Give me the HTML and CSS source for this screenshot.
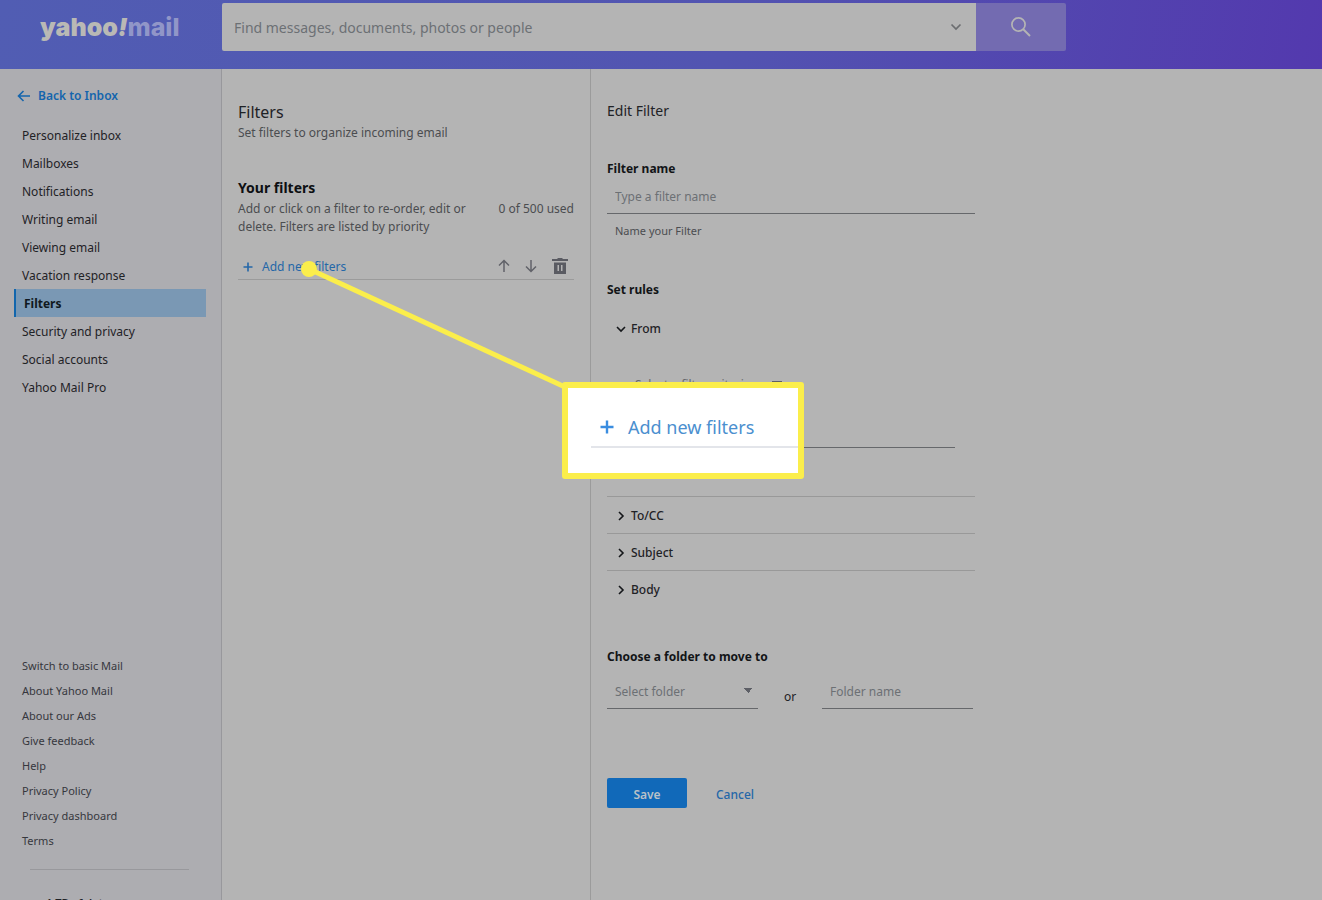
FILE: index.html
```html
<!DOCTYPE html>
<html lang="en">
<head>
<meta charset="utf-8">
<title>Yahoo Mail - Filters</title>
<link rel="stylesheet" href="styles.css">
</head>
<body>
<div class="app">
  <header class="topbar">
    <a class="logo" href="#" aria-label="Yahoo Mail"><span class="logo-yahoo">yahoo<i>!</i></span><span class="logo-mail">mail</span></a>
    <form class="search">
      <div class="search-field">
        <input class="search-input" type="text" aria-label="Search" placeholder="Find messages, documents, photos or people">
        <button class="icon-button" type="button" aria-label="Search options"><svg width="12" height="8" viewBox="0 0 12 8"><path d="M1.500 1.500 6 6l4.500-4.500" fill="none" stroke="#6b6d70" stroke-width="1.700"/></svg></button>
      </div>
      <button class="search-button" type="button" aria-label="Search"><svg width="22" height="22" viewBox="0 0 22 22" fill="none" stroke="#b4b4b4" stroke-width="1.700"><circle cx="8.500" cy="8.500" r="6.600"/><path d="m13 13 7 7" stroke-width="2"/></svg></button>
    </form>
  </header>
  <div class="columns">
    <nav class="sidebar">
      <a class="back" href="#"><svg width="14" height="12" viewBox="0 0 14 12" fill="none" stroke="#1465ad" stroke-width="1.600"><path d="M13 6H1.500M6.500 1l-5 5 5 5"/></svg>Back to Inbox</a>
      <ul class="menu">
        <li><a href="#">Personalize inbox</a></li>
        <li><a href="#">Mailboxes</a></li>
        <li><a href="#">Notifications</a></li>
        <li><a href="#">Writing email</a></li>
        <li><a href="#">Viewing email</a></li>
        <li><a href="#">Vacation response</a></li>
        <li><a class="current" href="#">Filters</a></li>
        <li><a href="#">Security and privacy</a></li>
        <li><a href="#">Social accounts</a></li>
        <li><a href="#">Yahoo Mail Pro</a></li>
      </ul>
      <div class="side-foot">
        <ul class="links">
          <li><a href="#">Switch to basic Mail</a></li>
          <li><a href="#">About Yahoo Mail</a></li>
          <li><a href="#">About our Ads</a></li>
          <li><a href="#">Give feedback</a></li>
          <li><a href="#">Help</a></li>
          <li><a href="#">Privacy Policy</a></li>
          <li><a href="#">Privacy dashboard</a></li>
          <li><a href="#">Terms</a></li>
        </ul>
        <div class="quota">1 TB of data</div>
      </div>
    </nav>
    <section class="filters">
      <h1 class="title">Filters</h1>
      <p class="note">Set filters to organize incoming email</p>
      <h2 class="subtitle">Your filters</h2>
      <div class="summary"><p class="note">Add or click on a filter to re-order, edit or delete. Filters are listed by priority</p><span class="note count">0 of 500 used</span></div>
      <div class="toolbar">
        <button class="add" type="button"><svg width="10" height="10" viewBox="0 0 10 10" stroke="#2467a8" stroke-width="1.600"><path d="M5 .5v9M.5 5h9"/></svg>Add new filters</button>
        <div class="tools">
          <button class="icon-button" type="button" aria-label="Move up"><svg width="12" height="14" viewBox="0 0 12 14" fill="none" stroke="#616269" stroke-width="1.500"><path d="M6 13V1.500M1 6.500l5-5 5 5"/></svg></button>
          <button class="icon-button" type="button" aria-label="Move down"><svg width="12" height="14" viewBox="0 0 12 14" fill="none" stroke="#616269" stroke-width="1.500"><path d="M6 1v11.500M1 7.500l5 5 5-5"/></svg></button>
          <button class="icon-button" type="button" aria-label="Delete"><svg width="16" height="16" viewBox="0 0 16 16"><path fill="#5a5b62" fill-rule="evenodd" d="M0 1h5.500V0h5v1H16v2H0zM2 4.500h12V16H2zM5.500 7v6H7V7zM9 7v6h1.500V7z"/></svg></button>
        </div>
      </div>
    </section>
    <main class="editor">
      <form class="form">
        <h2 class="form-title">Edit Filter</h2>
        <label class="label" for="name">Filter name</label>
        <input class="text" id="name" type="text" placeholder="Type a filter name">
        <p class="hint">Name your Filter</p>
        <h3 class="label rules-title">Set rules</h3>
        <button class="rule open" type="button"><svg width="10" height="10" viewBox="0 0 10 10" fill="none" stroke="#15171a" stroke-width="1.600"><path d="m1 3 4 4 4-4"/></svg>From</button>
        <div class="criteria">
          <select class="criterion" aria-label="Filter criterion"><option>Select a filter criterion</option></select>
          <input class="value" type="text" aria-label="Filter value">
        </div>
        <button class="rule" type="button"><svg width="10" height="10" viewBox="0 0 10 10" fill="none" stroke="#15171a" stroke-width="1.600"><path d="m3 1 4 4-4 4"/></svg>To/CC</button>
        <button class="rule" type="button"><svg width="10" height="10" viewBox="0 0 10 10" fill="none" stroke="#15171a" stroke-width="1.600"><path d="m3 1 4 4-4 4"/></svg>Subject</button>
        <button class="rule" type="button"><svg width="10" height="10" viewBox="0 0 10 10" fill="none" stroke="#15171a" stroke-width="1.600"><path d="m3 1 4 4-4 4"/></svg>Body</button>
        <label class="label folder-title" for="folder">Choose a folder to move to</label>
        <div class="folder-row">
          <select class="text folder" id="folder"><option>Select folder</option></select>
          <span class="or">or</span>
          <input class="text" type="text" aria-label="Folder name" placeholder="Folder name">
        </div>
        <div class="actions"><button class="save" type="button">Save</button><button class="cancel" type="button">Cancel</button></div>
      </form>
    </main>
  </div>
  <svg class="pointer" width="300" height="150" viewBox="0 0 300 150" aria-hidden="true"><path d="m9 9 256 118" stroke="#fbee4b" stroke-width="5"/><circle cx="9" cy="9" r="8" fill="#fbee4b"/></svg>
  <aside class="callout"><div class="callout-row"><svg width="14" height="14" viewBox="0 0 14 14" stroke="#3a8de0" stroke-width="2.400"><path d="M7 .5v13M.5 7h13"/></svg>Add new filters</div></aside>
</div>
</body>
</html>
```
FILE: styles.css
```css
* { box-sizing: border-box; }
body { margin: 0; font-family: "Noto Sans", "Open Sans", sans-serif; font-size: 12px; line-height: 18px; color: #1f2226; background: #b4b4b4; }
h1, h2, h3, p, ul { margin: 0; padding: 0; font-weight: 400; }
ul { list-style: none; }
a { color: inherit; text-decoration: none; }
button, input, select { font: inherit; color: inherit; background: none; border: 0; border-radius: 0; padding: 0; margin: 0; }
input::placeholder { color: #6c7074; opacity: 1; }
svg { display: block; flex: none; }
.app { position: relative; height: 100vh; overflow: hidden; display: flex; flex-direction: column; }
.topbar { flex: none; display: flex; height: 69px; padding-top: 3px; background: linear-gradient(100deg, #515db3 0%, #5254b1 55%, #5339ae 100%); }
.logo { width: 222px; padding: 8px 0 0 40px; display: flex; font: 900 25px/32px Inter, sans-serif; color: #b9b9b5; }
.logo-mail { color: #9196c8; font-weight: 800; }
.search { display: flex; height: 48px; width: 844px; }
.search-field { flex: 1; display: flex; align-items: center; padding: 0 14px 0 12px; background: #b4b4b4; border-radius: 2px 0 0 2px; }
.search-input { flex: 1; padding-top: 2px; font-size: 14px; line-height: 20px; }
.search-button { width: 90px; display: grid; place-items: center; background: #736bb1; border-radius: 0 2px 2px 0; }
.icon-button { display: grid; place-items: center; }
.columns { flex: 1; min-height: 0; display: flex; }
.sidebar { width: 222px; flex: none; display: flex; flex-direction: column; background: #adadb1; border-right: 1px solid #98989c; overflow: hidden; }
.back { display: flex; align-items: center; gap: 7px; padding: 18px 0 0 17px; color: #1465ad; font-weight: 600; }
.menu { padding: 16px 15px 0 14px; }
.menu a { display: block; padding: 6px 8px 4px; }
.menu .current { background: #7a98b4; border-left: 2px solid #1266ad; font-weight: 700; color: #101820; }
.side-foot { flex: none; margin-top: 252px; padding: 0 22px; }
.links { font-size: 11px; line-height: 25px; color: #36373d; }
.quota { margin: 16px 10px 0 8px; padding: 24px 0 0 16px; border-top: 1px solid #98989c; font-size: 11px; font-weight: 600; }
.filters { width: 369px; flex: none; padding: 32px 16px 0; border-right: 1px solid #9b9b9b; }
.title { font-size: 16px; line-height: 22px; padding-bottom: 1px; }
.note { color: #4b4d50; }
.subtitle { padding-top: 36px; font-size: 14px; line-height: 20px; font-weight: 700; color: #0d0f12; }
.summary { display: flex; justify-content: space-between; gap: 12px; padding-top: 2px; }
.count { flex: none; }
.toolbar { display: flex; align-items: center; justify-content: space-between; padding: 22px 6px 3px 5px; border-bottom: 1px solid #9b9b9b; }
.add { display: flex; align-items: center; gap: 9px; color: #2467a8; }
.tools { display: flex; gap: 15px; padding-bottom: 2px; }
.editor { flex: 1; padding: 32px 16px 0; }
.form { max-width: 368px; display: flex; flex-direction: column; }
.form-title { font-size: 14px; line-height: 20px; }
.label { padding-top: 39px; font-size: 12px; font-weight: 700; color: #121417; }
.text { width: 100%; min-width: 0; height: 36px; padding: 2px 8px 0; border-bottom: 1px solid #66686b; }
.hint { padding: 8px 8px 0; font-size: 11px; color: #4b4d50; }
.rules-title { padding-top: 41px; }
.rule { display: flex; align-items: center; gap: 5px; height: 37px; padding: 1px 0 0 9px; border-top: 1px solid #999; font-weight: 500; }
.rule.open { margin-top: 11px; border: 0; }
.criteria { display: flex; flex-direction: column; padding: 29px 20px 48px; }
.criterion { appearance: none; align-self: start; width: 160px; height: 18px; padding-left: 8px; color: #66686b; background: conic-gradient(from 315deg at 50% 100%, #5d5f66 90deg, transparent 0) no-repeat right 5px top 5px / 10px 5px; }
.value { height: 54px; border-bottom: 1px solid #66686b; }
.folder-title { padding-top: 41px; }
.folder-row { display: grid; grid-template-columns: 151px 64px 151px; padding-top: 7px; }
.folder { appearance: none; color: #6c7074; background: conic-gradient(from 315deg at 50% 100%, #5d5f66 90deg, transparent 0) no-repeat right 5px center / 10px 5px; }
.or { text-align: center; padding-top: 15px; }
.actions { display: flex; align-items: center; gap: 29px; padding-top: 69px; }
.save, .cancel { height: 30px; padding-top: 3px; }
.save { width: 80px; background: #1169b9; border-radius: 2px; font-weight: 600; color: #b9c1c8; }
.cancel { color: #2467a8; font-weight: 500; }
.pointer { position: absolute; left: 300px; top: 260px; }
.callout { position: absolute; left: 562px; top: 382px; width: 242px; height: 97px; padding: 25px 0 0 23px; background: #fff; border: 6px solid #fbee4b; border-radius: 3px; }
.callout-row { display: flex; align-items: center; gap: 14px; padding: 0 9px 5px; border-bottom: 2px solid #e3e5ea; font-size: 18px; line-height: 28px; color: #4b8fcf; }
```
